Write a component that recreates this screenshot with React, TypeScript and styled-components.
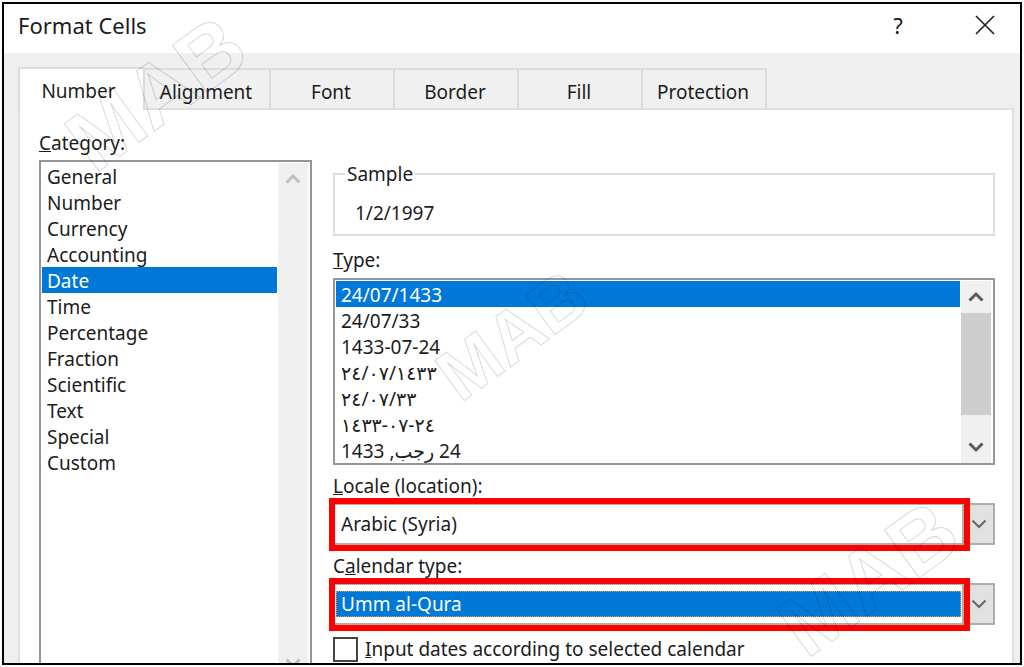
import React from "react";
import styled, { createGlobalStyle, css } from "styled-components";

const GlobalStyle = createGlobalStyle`
  * { box-sizing: border-box; }
  body {
    margin: 0;
    background: #fbfbf9;
    color: #1c1c1c;
    font-family: "Noto Sans", "Open Sans", "DejaVu Sans", sans-serif;
    font-size: 19px;
    line-height: 26px;
  }
  button, select, input { font: inherit; color: inherit; margin: 0; }
`;

const Page = styled.main`
  padding: 2px;
`;

const Dialog = styled.section`
  position: relative;
  border: 2px solid #000;
  background: #efefef;
`;

const TitleBar = styled.header`
  display: flex;
  align-items: center;
  height: 49px;
  padding: 0 23px 8px 14px;
  background: #fff;
`;

const Title = styled.h1`
  flex: 1;
  margin: 0;
  font-size: 22px;
  font-weight: 400;
`;

const TitleButton = styled.button`
  display: flex;
  align-items: center;
  justify-content: center;
  width: 24px;
  height: 32px;
  margin-left: 63px;
  padding: 0;
  border: 0;
  background: none;
  font-size: 22px;
`;

const TabStrip = styled.div`
  display: flex;
  align-items: flex-end;
  padding: 14px 14px 0;
`;

const Tab = styled.button<{ $active?: boolean; $wide?: boolean }>`
  width: ${(p) => (p.$wide ? 128 : 126)}px;
  height: 40px;
  margin-right: -2px;
  padding: 6px 2px 0 0;
  border: 2px solid #dcdcdc;
  border-bottom: 0;
  background: #f0f0f0;
  ${(p) =>
    p.$active &&
    css`
      position: relative;
      z-index: 1;
      width: 127px;
      height: 43px;
      margin-bottom: -2px;
      padding: 2px 6px 0 0;
      background: #fff;
    `}
`;

const TabPanel = styled.div`
  display: flex;
  align-items: stretch;
  gap: 21px;
  margin: 0 6px 0 14px;
  padding: 20px 17px 0 19px;
  border: 2px solid #dfdfdf;
  border-bottom: 0;
  background: #fff;
`;

const CategoryColumn = styled.div`
  display: flex;
  flex-direction: column;
  flex: 0 0 273px;
`;

const DetailColumn = styled.div`
  flex: 1;
  min-width: 0;
  padding: 31px 0 1px;
`;

const Label = styled.label`
  display: block;
  width: fit-content;
`;

const CategoryLabel = styled(Label)`
  margin-bottom: 4px;
`;

const TypeLabel = styled(Label)`
  margin: 11px 0 5px;
`;

const ComboLabel = styled(Label)`
  margin: 8px 0 4px;
`;

const ListFrame = styled.div<{ $open?: boolean }>`
  display: flex;
  border: 2px solid #92969c;
  ${(p) => (p.$open ? "flex: 1; border-bottom: 0;" : "")}
  background: #fff;
  padding: 1px 2px 0 1px;
`;

const Options = styled.ul`
  flex: 1;
  margin: 0;
  padding: 0;
  list-style: none;
`;

const Option = styled.li<{ $selected?: boolean }>`
  height: 26px;
  padding-left: 5px;
  line-height: 28px;
  white-space: nowrap;
  ${(p) => p.$selected && "background: #0078d7; color: #fff;"}
`;

const ScrollTrack = styled.div`
  display: flex;
  flex-direction: column;
  width: 30px;
  margin-left: 1px;
  background: #f0f0f0;
`;

const ScrollButton = styled.button<{ $last?: boolean }>`
  display: flex;
  align-items: center;
  justify-content: center;
  height: 32px;
  padding: 0;
  border: 0;
  background: none;
  ${(p) => p.$last && "margin-top: auto;"}
`;

const ClippedEnd = styled.div`
  height: 6px;
  margin-top: auto;
  overflow: hidden;
  display: flex;
  justify-content: center;
`;

const ScrollThumb = styled.div`
  height: 102px;
  background: #cdcdcd;
`;

const Sample = styled.fieldset`
  margin: 0;
  padding: 13px 20px 8px;
  border: 2px solid #dcdcdc;
  min-width: 0;
`;

const Legend = styled.legend`
  margin-left: -10px;
  padding: 0 2px;
`;

const Combo = styled.div`
  position: relative;
  display: flex;
  height: 42px;
  border: 2px solid #adadad;
  background: #fff;
`;

const Select = styled.select<{ $focused?: boolean }>`
  appearance: none;
  flex: 1;
  margin: 6px 1px;
  padding: 0 0 0 5px;
  border: 0;
  border-radius: 0;
  background: #fff;
  ${(p) =>
    p.$focused &&
    css`
      background: #0078d7;
      color: #fff;
      outline: 1px dotted #e39a4f;
      outline-offset: -1px;
    `}
`;

const ComboArrow = styled.span`
  display: flex;
  align-items: center;
  justify-content: center;
  width: 31px;
  border-left: 2px solid #adadad;
  background: #e1e1e1;
  pointer-events: none;
`;

const Highlight = styled.span`
  position: absolute;
  inset: -7px 23px -8px -6px;
  border: 6px solid #fe0000;
  pointer-events: none;
`;

const CheckRow = styled.div`
  display: flex;
  align-items: center;
  gap: 7px;
  margin-top: 11px;
`;

const CheckBox = styled.input`
  appearance: none;
  width: 25px;
  height: 25px;
  border: 2px solid #444;
  background: #fff;
`;

const Watermark = styled.span<{ $x: string; $y: string; $size: number }>`
  position: absolute;
  left: ${(p) => p.$x};
  top: ${(p) => p.$y};
  font-family: "Liberation Sans Narrow", "Liberation Sans", sans-serif;
  font-size: ${(p) => p.$size}px;
  font-weight: 700;
  line-height: 1;
  color: transparent;
  -webkit-text-stroke: 1px rgba(0, 0, 0, 0.16);
  transform: translate(-50%, -50%) rotate(-36deg);
  pointer-events: none;
  z-index: 2;
`;

type ChevronProps = { up?: boolean; color: string; bold?: boolean };

const Chevron = ({ up, color, bold }: ChevronProps) => (
  <svg width="16" height="12" viewBox="0 0 16 12" aria-hidden="true">
    <path
      d={up ? "M1.5 9.5 L8 3 L14.5 9.5" : "M1.5 2.5 L8 9 L14.5 2.5"}
      fill="none"
      stroke={color}
      strokeWidth={bold ? 3 : 2}
    />
  </svg>
);

const tabs = ["Number", "Alignment", "Font", "Border", "Fill", "Protection"];

const categories = [
  "General",
  "Number",
  "Currency",
  "Accounting",
  "Date",
  "Time",
  "Percentage",
  "Fraction",
  "Scientific",
  "Text",
  "Special",
  "Custom",
];

const types = [
  "24/07/1433",
  "24/07/33",
  "1433-07-24",
  "\u202D٢٤/٠٧/١٤٣٣",
  "\u202D٢٤/٠٧/٣٣",
  "\u202D١٤٣٣-٠٧-٢٤",
  "\u206724 رجب, 1433\u2069",
];

export default function App() {
  return (
    <Page>
      <GlobalStyle />
      <Dialog role="dialog" aria-labelledby="title">
        <TitleBar>
          <Title id="title">Format Cells</Title>
          <TitleButton type="button">?</TitleButton>
          <TitleButton type="button" aria-label="Close">
            <svg width="20" height="20" viewBox="0 0 20 20" aria-hidden="true">
              <path d="M1 1 L19 19 M19 1 L1 19" stroke="#222" strokeWidth="1.7" />
            </svg>
          </TitleButton>
        </TitleBar>
        <TabStrip role="tablist">
          {tabs.map((name, i) => (
            <Tab
              key={name}
              type="button"
              role="tab"
              aria-selected={i === 0}
              $active={i === 0}
              $wide={name === "Alignment"}
            >
              {name}
            </Tab>
          ))}
        </TabStrip>
        <TabPanel role="tabpanel">
          <CategoryColumn>
            <CategoryLabel as="span" id="category">
              <u>C</u>ategory:
            </CategoryLabel>
            <ListFrame $open>
              <Options role="listbox" aria-labelledby="category">
                {categories.map((name) => (
                  <Option key={name} role="option" aria-selected={name === "Date"} $selected={name === "Date"}>
                    {name}
                  </Option>
                ))}
              </Options>
              <ScrollTrack>
                <ScrollButton type="button" aria-label="Scroll up">
                  <Chevron up bold color="#bfbfbf" />
                </ScrollButton>
                <ClippedEnd>
                  <Chevron bold color="#bfbfbf" />
                </ClippedEnd>
              </ScrollTrack>
            </ListFrame>
          </CategoryColumn>
          <DetailColumn>
            <Sample>
              <Legend>Sample</Legend>
              1/2/1997
            </Sample>
            <TypeLabel as="span" id="type">
              <u>T</u>ype:
            </TypeLabel>
            <ListFrame>
              <Options role="listbox" aria-labelledby="type">
                {types.map((name, i) => (
                  <Option key={name} role="option" aria-selected={i === 0} $selected={i === 0}>
                    {name}
                  </Option>
                ))}
              </Options>
              <ScrollTrack>
                <ScrollButton type="button" aria-label="Scroll up">
                  <Chevron up bold color="#5a5a5a" />
                </ScrollButton>
                <ScrollThumb />
                <ScrollButton type="button" aria-label="Scroll down" $last>
                  <Chevron bold color="#5a5a5a" />
                </ScrollButton>
              </ScrollTrack>
            </ListFrame>
            <ComboLabel htmlFor="locale">
              <u>L</u>ocale (location):
            </ComboLabel>
            <Combo>
              <Select id="locale">
                <option>Arabic (Syria)</option>
              </Select>
              <ComboArrow>
                <Chevron color="#666" />
              </ComboArrow>
              <Highlight />
            </Combo>
            <ComboLabel htmlFor="calendar">
              C<u>a</u>lendar type:
            </ComboLabel>
            <Combo>
              <Select id="calendar" $focused>
                <option>Umm al-Qura</option>
              </Select>
              <ComboArrow>
                <Chevron color="#666" />
              </ComboArrow>
              <Highlight />
            </Combo>
            <CheckRow>
              <CheckBox type="checkbox" id="input-dates" />
              <Label htmlFor="input-dates">
                <u>I</u>nput dates according to selected calendar
              </Label>
            </CheckRow>
          </DetailColumn>
        </TabPanel>
        <Watermark aria-hidden="true" $x="15%" $y="89px" $size={86}>
          MAB
        </Watermark>
        <Watermark aria-hidden="true" $x="50%" $y="331px" $size={72}>
          MAB
        </Watermark>
        <Watermark aria-hidden="true" $x="85%" $y="574px" $size={86}>
          MAB
        </Watermark>
      </Dialog>
    </Page>
  );
}
